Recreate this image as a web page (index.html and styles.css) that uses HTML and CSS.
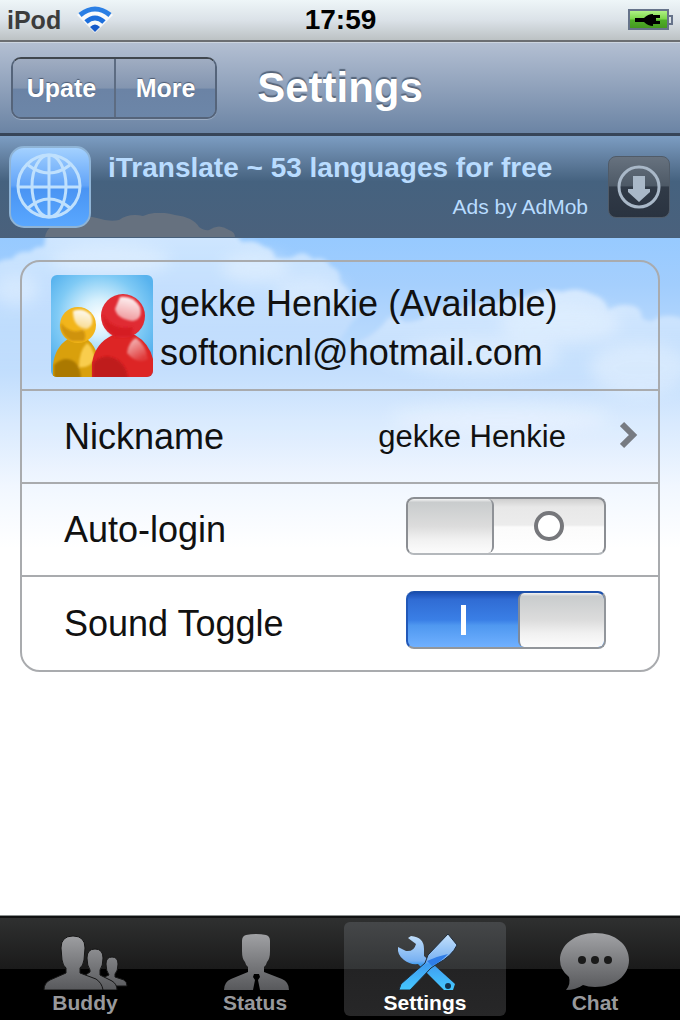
FILE: index.html
```html
<!DOCTYPE html>
<html lang="en">
<head>
    <meta charset="UTF-8">
    <meta name="viewport" content="width=device-width, initial-scale=1.0">
    <title>Settings</title>
    <link rel="stylesheet" href="styles.css">
</head>
<body>

    <!-- Status bar -->
    <div class="status-bar">
        <div class="carrier">
            <span>iPod</span>
            <svg class="wifi" viewBox="0 0 36 28" aria-hidden="true">
                <path d="M0 9 Q18 -8 36 9 L18 27 Z" fill="#fff" opacity="0.8"/>
                <g fill="none" stroke="#1d6fdc" stroke-width="5">
                    <path d="M3 9 Q18 -3 33 9" stroke="#2b7fe4"/>
                    <path d="M9 16 Q18 8 27 16"/>
                </g>
                <path d="M13 21 Q18 16 23 21 L18 26 Z" fill="#1559c9"/>
            </svg>
        </div>
        <span class="clock">17:59</span>
        <svg class="battery" viewBox="0 0 46 22" aria-hidden="true">
            <defs>
                <linearGradient id="charge" x1="0" y1="0" x2="0" y2="1">
                    <stop offset="0" stop-color="#b6f58c"/>
                    <stop offset="0.45" stop-color="#7ed84c"/>
                    <stop offset="0.55" stop-color="#4fae28"/>
                    <stop offset="1" stop-color="#43961f"/>
                </linearGradient>
            </defs>
            <rect x="1" y="1" width="39" height="19" fill="url(#charge)" stroke="#66738a" stroke-width="2"/>
            <path d="M41 7 h3 v8 h-3" fill="none" stroke="#66738a" stroke-width="2"/>
            <path d="M7 9 h9 q4 -4 9 -4 v1 h7 v3 h-4 v3 h4 v3 h-7 v2 q-5 0 -9 -4 h-9 z" fill="#000"/>
        </svg>
    </div>

    <!-- Navigation bar -->
    <header class="nav-bar">
        <div class="nav-buttons">
            <button type="button">Upate</button>
            <button type="button">More</button>
        </div>
        <h1>Settings</h1>
    </header>

    <!-- Ad banner -->
    <div class="ad">
        <svg class="ad-cloud" viewBox="0 0 190 24" aria-hidden="true">
            <path d="M0 24 Q2 10 22 11 Q34 1 52 5 Q64 9 74 7 Q84 0 98 3 Q112 -3 130 2 Q148 4 154 14 Q160 18 164 17 Q174 10 184 17 Q190 19 190 24 Z" fill="#66717f"/>
        </svg>
        <svg class="ad-icon" viewBox="0 0 82 82" aria-hidden="true">
            <defs>
                <linearGradient id="globe" x1="0" y1="0" x2="0" y2="1">
                    <stop offset="0" stop-color="#a5d2ff"/>
                    <stop offset="0.48" stop-color="#62a4f8"/>
                    <stop offset="0.52" stop-color="#4a94f3"/>
                    <stop offset="1" stop-color="#5aa8ff"/>
                </linearGradient>
            </defs>
            <rect x="1" y="1" width="80" height="80" rx="14" fill="url(#globe)" stroke="#8fb4d6" stroke-width="2"/>
            <g fill="none" stroke="#bfe0fd" stroke-width="3">
                <circle cx="40" cy="40" r="31"/>
                <ellipse cx="40" cy="40" rx="17" ry="31"/>
                <path d="M40 9 V71 M9 41 H71"/>
                <path d="M19 19 Q40 35 61 19 M19 62 Q40 44 61 62"/>
            </g>
        </svg>
        <div class="ad-text">
            <a href="#">iTranslate ~ 53 languages for free</a>
            <small>Ads by AdMob</small>
        </div>
        <button type="button" class="ad-download" aria-label="Download">
            <svg viewBox="0 0 44 44" aria-hidden="true">
                <circle cx="22" cy="22" r="20" fill="none" stroke="#a9b8c8" stroke-width="3"/>
                <path d="M16 11 h12 v13 h5 v3 l-11 10 l-11 -10 v-3 h5 z" fill="#a9b8c8"/>
            </svg>
        </button>
    </div>

    <main class="content">
        <!-- Sky behind the list -->
        <svg class="sky" viewBox="0 0 680 310" preserveAspectRatio="none" aria-hidden="true">
            <defs>
                <linearGradient id="sky" x1="0" y1="0" x2="0" y2="1">
                    <stop offset="0" stop-color="#97caff"/>
                    <stop offset="0.15" stop-color="#a1cdfd"/>
                    <stop offset="0.45" stop-color="#c4dffd"/>
                    <stop offset="0.6" stop-color="#d9eafe"/>
                    <stop offset="0.8" stop-color="#f1f7ff"/>
                    <stop offset="1" stop-color="#ffffff"/>
                </linearGradient>
                <linearGradient id="cloud" x1="0" y1="0" x2="0" y2="1">
                    <stop offset="0" stop-color="#fff" stop-opacity="0.55"/>
                    <stop offset="0.5" stop-color="#fff" stop-opacity="0.25"/>
                    <stop offset="0.9" stop-color="#fff" stop-opacity="0"/>
                </linearGradient>
                <filter id="soft" x="-10%" y="-10%" width="120%" height="120%">
                    <feGaussianBlur stdDeviation="2"/>
                </filter>
                <filter id="softer" x="-20%" y="-20%" width="140%" height="140%">
                    <feGaussianBlur stdDeviation="8"/>
                </filter>
            </defs>
            <rect width="680" height="310" fill="url(#sky)"/>
            <g filter="url(#soft)" fill="url(#cloud)">
                <path d="M-10 30 Q0 20 12 21 Q18 12 30 14 Q36 8 44 9 L46 -4 H236 L242 4 Q256 1 264 9 Q274 10 275 20 Q290 22 296 17 Q304 12 313 21 Q326 18 330 28 Q342 32 340 44 Q352 52 352 64 Q366 74 352 84 Q330 120 300 140 Q240 150 160 150 Q60 150 -10 150 Z"/>
                <path d="M350 108 Q376 98 388 80 Q398 76 404 84 Q420 84 428 76 Q444 66 462 72 Q474 62 490 66 Q510 58 524 60 Q540 50 562 54 Q576 48 592 56 Q606 60 608 72 Q618 66 628 67 Q642 68 642 80 Q652 86 656 80 Q672 74 690 84 V150 H420 Q380 135 350 108 Z"/>
            </g>
            <g filter="url(#softer)" fill="#fff" opacity="0.3">
                <ellipse cx="110" cy="22" rx="60" ry="16"/>
                <ellipse cx="16" cy="52" rx="24" ry="16"/>
                <ellipse cx="255" cy="30" rx="34" ry="16"/>
                <ellipse cx="310" cy="54" rx="36" ry="16"/>
                <ellipse cx="560" cy="86" rx="60" ry="20"/>
                <ellipse cx="480" cy="118" rx="80" ry="20"/>
                <ellipse cx="640" cy="130" rx="50" ry="26"/>
                <ellipse cx="500" cy="180" rx="110" ry="14"/>
            </g>
        </svg>

        <div class="card">
            <div class="row profile">
                <svg class="avatar" viewBox="0 0 102 102" role="img" aria-label="Messenger">
                    <defs>
                        <radialGradient id="glow" cx="0.48" cy="0.42" r="0.6">
                            <stop offset="0" stop-color="#ffffff"/>
                            <stop offset="0.3" stop-color="#d6f0fd"/>
                            <stop offset="0.7" stop-color="#7fcaf5"/>
                            <stop offset="1" stop-color="#58b3ee"/>
                        </radialGradient>
                        <linearGradient id="shine" x1="0.6" y1="0" x2="0.4" y2="1">
                            <stop offset="0" stop-color="#fff" stop-opacity="0.95"/>
                            <stop offset="1" stop-color="#fff" stop-opacity="0.5"/>
                        </linearGradient>
                        <linearGradient id="shine-low" x1="0" y1="0" x2="0.5" y2="1">
                            <stop offset="0" stop-color="#fff" stop-opacity="0.75"/>
                            <stop offset="1" stop-color="#fff" stop-opacity="0.1"/>
                        </linearGradient>
                        <filter id="blend">
                            <feGaussianBlur stdDeviation="1"/>
                        </filter>
                        <clipPath id="avatar-clip"><rect width="102" height="102" rx="6"/></clipPath>
                    </defs>
                    <g clip-path="url(#avatar-clip)">
                        <rect width="102" height="102" fill="url(#glow)"/>
                        <!-- yellow buddy -->
                        <path d="M2 106 V90 Q4 72 17 64 L36 64 Q44 70 48 84 V106 Z" fill="#d9a00c"/>
                        <circle cx="27" cy="50" r="18" fill="#f2b51b"/>
                        <g filter="url(#blend)">
                            <path d="M3 104 V90 Q14 80 24 87 Q30 94 30 104 Z" fill="#ab7906"/>
                            <path d="M28 92 Q28 76 36 68 Q42 72 44 84 Q38 94 28 92 Z" fill="#f9cd4e"/>
                            <path d="M10 48 Q20 60 32 55 Q36 60 33 66 H21 Q9 60 10 48 Z" fill="#cf930a"/>
                            <path d="M22 36 Q32 32 40 40 Q44 50 36 54 Q22 53 22 36 Z" fill="url(#shine)"/>
                        </g>
                        <!-- red buddy -->
                        <path d="M41 106 V88 Q44 68 62 60 H84 Q98 68 102 84 V106 Z" fill="#dd2525"/>
                        <circle cx="72" cy="41" r="22" fill="#e02b33"/>
                        <g filter="url(#blend)">
                            <path d="M42 104 V88 Q54 76 68 86 Q76 92 77 104 Z" fill="#bf1b1d"/>
                            <path d="M76 78 Q78 66 85 63 Q95 70 97 84 Q86 90 76 78 Z" fill="url(#shine-low)"/>
                            <path d="M52 40 Q62 56 82 52 Q80 58 82 62 H64 Q52 54 52 40 Z" fill="#d51f22"/>
                            <path d="M69 22 Q82 20 89 32 Q92 44 82 46 Q66 44 64 34 Z" fill="url(#shine)"/>
                        </g>
                    </g>
                </svg>
                <div class="profile-text">
                    <div>gekke Henkie (Available)</div>
                    <div>softonicnl@hotmail.com</div>
                </div>
            </div>

            <a class="row nickname" href="#">
                <span>Nickname</span>
                <span class="value">gekke Henkie</span>
                <svg class="chevron" viewBox="0 0 18 28" aria-hidden="true">
                    <path d="M2 3 L13 14 L2 25" fill="none" stroke="#777b82" stroke-width="6"/>
                </svg>
            </a>

            <div class="row">
                <label for="auto-login">Auto-login</label>
                <input type="checkbox" class="toggle" id="auto-login">
            </div>

            <div class="row">
                <label for="sound">Sound Toggle</label>
                <input type="checkbox" class="toggle" id="sound" checked>
            </div>
        </div>
    </main>

    <!-- Tab bar -->
    <nav class="tab-bar">
        <svg class="defs" width="0" height="0" aria-hidden="true">
            <defs>
                <linearGradient id="grey" gradientUnits="userSpaceOnUse" x1="0" y1="4" x2="0" y2="60">
                    <stop offset="0" stop-color="#a0a1a4"/>
                    <stop offset="0.5" stop-color="#7b7c7f"/>
                    <stop offset="1" stop-color="#58595c"/>
                </linearGradient>
                <linearGradient id="blue" gradientUnits="userSpaceOnUse" x1="0" y1="4" x2="0" y2="60">
                    <stop offset="0" stop-color="#c5e1fb"/>
                    <stop offset="0.48" stop-color="#78b1f2"/>
                    <stop offset="0.54" stop-color="#3f9cf0"/>
                    <stop offset="1" stop-color="#45c8ff"/>
                </linearGradient>
            </defs>
        </svg>

        <a href="#" class="tab">
            <svg viewBox="0 0 86 60" aria-hidden="true">
                <g fill="url(#grey)" stroke="#151515" stroke-width="1">
                    <path d="M70 27 Q76 27 76 34 Q76 41 73 44 V47 L82 50 Q85 52 85 56 H66 L60 48 L67 45 Q64 41 64 34 Q64 27 70 27 Z"/>
                    <path d="M53 19 Q61 19 61 28 Q61 36 58 40 V45 L70 51 Q75 54 75 60 H50 L42 46 L48 42 V40 Q45 36 45 28 Q45 19 53 19 Z"/>
                    <path d="M31 6 Q43 6 43 18 L42 30 Q41 36 38 38 V43 L54 49 Q60 53 61 60 H2 Q2 53 8 50 L24 43 V38 Q21 36 20 30 L19 18 Q19 6 31 6 Z"/>
                </g>
            </svg>
            <span>Buddy</span>
        </a>
        <a href="#" class="tab">
            <svg viewBox="0 0 86 60" aria-hidden="true">
                <path d="M34 5 Q44 3 54 5 Q58 6 58 11 V21 Q58 29 55 32 Q54 36 52 37 V42 L70 49 Q77 52 77 60 H12 Q12 52 19 49 L36 42 V37 Q34 36 33 32 Q30 29 30 21 V11 Q30 6 34 5 Z" fill="url(#grey)"/>
                <path d="M42 44 h5 l1 3 l-2 3 l2 10 h-7 l2 -10 l-2 -3 z" fill="#000"/>
            </svg>
            <span>Status</span>
        </a>
        <a href="#" class="tab active" aria-current="page">
            <svg viewBox="0 0 86 60" aria-hidden="true">
                <!-- wrench -->
                <path d="M29 6 Q42 7 42 19 L42 26 L73 54 L71 60 L62 60 L36 34 Q28 35 22 30 Q15 25 16 17 L24 21 Q32 22 34 14 L26 8 Z" fill="url(#blue)"/>
                <circle cx="66" cy="56" r="3" fill="#12324d"/>
                <!-- screwdriver -->
                <path d="M66 4 L75 15 Q70 26 55 34 L49 38 L28 60 H17 L19 54 L43 33 L46 25 Z" fill="url(#blue)" stroke="#1f2c3a" stroke-width="1"/>
                <path d="M45 31 Q56 26 66 24 Q60 31 50 36 Z" fill="#2f7de8"/>
            </svg>
            <span>Settings</span>
        </a>
        <a href="#" class="tab">
            <svg viewBox="0 0 86 60" aria-hidden="true">
                <path d="M43 3 C64 3 77 15 77 30 C77 46 62 57 43 57 Q36 57 31 55 Q24 60 14 60 Q19 54 17 47 Q8 40 8 30 C8 15 23 3 43 3 Z" fill="url(#grey)"/>
                <g fill="#1a1a1a">
                    <circle cx="30" cy="30" r="4"/>
                    <circle cx="43" cy="30" r="4"/>
                    <circle cx="56" cy="30" r="4"/>
                </g>
            </svg>
            <span>Chat</span>
        </a>
    </nav>

</body>
</html>
```
FILE: styles.css
```css
*,
*::before,
*::after {
    box-sizing: border-box;
}

body {
    margin: 0;
    min-height: 100vh;
    display: flex;
    flex-direction: column;
    background-color: #fff;
    color: #111;
    font-family: "Liberation Sans", Arial, sans-serif;
}

button {
    font-family: inherit;
    cursor: pointer;
}

a {
    color: inherit;
    text-decoration: none;
}

/* Status bar */
.status-bar {
    display: grid;
    grid-template-columns: 1fr auto 1fr;
    align-items: center;
    height: 42px;
    padding: 0 6px 0 7px;
    background: linear-gradient(#eef6f8, #dbe2e8 50%, #bcc2c4);
    border-bottom: 2px solid #6b6e72;
    font-weight: bold;
}

.carrier {
    display: flex;
    align-items: center;
    gap: 16px;
    color: #3c3c3c;
    font-size: 25px;
}

.wifi {
    width: 36px;
    height: 28px;
}

.clock {
    color: #000;
    font-size: 28px;
}

.battery {
    width: 46px;
    height: 22px;
    justify-self: end;
}

/* Navigation bar */
.nav-bar {
    display: grid;
    grid-template-columns: 1fr auto 1fr;
    align-items: center;
    height: 94px;
    padding: 0 11px;
    background: linear-gradient(#b3bfd2, #8fa1bb 50%, #6b84a4);
    border-top: 1px solid #cdd5e0;
    border-bottom: 3px solid #374558;
}

.nav-bar h1 {
    margin: 0;
    color: #fff;
    font-size: 42px;
    text-shadow: 0 -2px 1px #56657a;
}

.nav-buttons {
    display: flex;
    justify-self: start;
    border: 2px solid #55647a;
    border-top-color: #40474f;
    border-radius: 10px;
    overflow: hidden;
    box-shadow: 0 1px 0 #9aabc2;
}

.nav-buttons button {
    width: 101px;
    height: 58px;
    padding: 0 4px 0 0;
    border: 0;
    background: linear-gradient(#a0adc2, #8395b0 50%, #6b83a5 52%, #6c86a8);
    color: #fff;
    font-size: 25px;
    font-weight: bold;
    text-shadow: 0 -1px 1px #4c5b72;
}

.nav-buttons button + button {
    padding-right: 0;
    border-left: 2px solid #5d6c82;
}

/* Ad banner */
.ad {
    position: relative;
    display: flex;
    align-items: center;
    height: 102px;
    padding: 0 10px 0 9px;
    background: linear-gradient(#7c9dc2, #5f7c9c 25%, #45627f 45%, #4a617c);
    border-bottom: 1px solid #48607a;
}

/* Top of the cloud showing through the banner */
.ad-cloud {
    position: absolute;
    left: 45px;
    bottom: 0;
    width: 190px;
    height: 24px;
}

.ad-icon {
    position: relative;
    width: 82px;
    height: 82px;
}

.ad-text {
    position: relative;
    flex: 1;
    display: flex;
    flex-direction: column;
    padding: 0 20px 0 17px;
    color: #b9dcff;
}

.ad-text a {
    font-size: 28px;
    font-weight: bold;
    line-height: 40px;
}

.ad-text small {
    align-self: flex-end;
    font-size: 21px;
    line-height: 38px;
}

.ad-download {
    display: flex;
    align-items: center;
    justify-content: center;
    width: 62px;
    height: 62px;
    padding: 0;
    border: 1px solid #505b68;
    border-radius: 8px;
    background: linear-gradient(#67727f, #4d5966 48%, #303a47 50%, #2a3340);
}

.ad-download svg {
    width: 44px;
    height: 44px;
}

/* Settings list */
.content {
    position: relative;
    flex: 1;
    padding: 22px 20px;
}

.sky {
    position: absolute;
    top: 0;
    left: 0;
    width: 100%;
    height: 310px;
}

.card {
    position: relative;
    border: 2px solid #a9abae;
    border-radius: 20px;
    background-color: rgba(255, 255, 255, 0.05);
    font-size: 36px;
}

.row {
    display: flex;
    align-items: center;
    justify-content: space-between;
    min-height: 93px;
    padding: 0 52px 0 42px;
    border-bottom: 2px solid #a9abae;
}

.row:last-child {
    border-bottom: 0;
}

.profile {
    justify-content: flex-start;
    gap: 7px;
    min-height: 129px;
    padding: 0 20px 0 29px;
}

.avatar {
    width: 102px;
    height: 102px;
}

.profile-text {
    padding-top: 4px;
    line-height: 49px;
}

.nickname {
    padding-right: 20px;
}

.value {
    flex: 1;
    padding-right: 54px;
    font-size: 31px;
    text-align: right;
}

.chevron {
    width: 18px;
    height: 28px;
    margin-bottom: 4px;
}

/* On/off switch, the knob is ::before and the mark is ::after */
.toggle {
    appearance: none;
    display: flex;
    align-items: center;
    width: 200px;
    height: 58px;
    margin: 0 0 8px;
    border: 2px solid #8b8e93;
    border-bottom-color: #b4b8bc;
    border-radius: 8px;
    background: linear-gradient(#cfcfcf, #e8e8e8 15%, #ececec 48%, #fbfbfb 52%, #fff);
    overflow: hidden;
    cursor: pointer;
}

.toggle::before {
    content: "";
    width: 86px;
    height: 54px;
    border-right: 2px solid #8f9297;
    border-radius: 6px;
    background: linear-gradient(#f4f4f4, #c9cccd 6%, #dcdcdc 50%, #f1f1f1 75%, #fcfcfc);
}

.toggle::after {
    content: "";
    width: 30px;
    height: 30px;
    margin: 0 auto;
    border: 4px solid #76777b;
    border-radius: 50%;
    background-color: #fff;
}

.toggle:checked {
    border-color: #1c50ab #92969b #92969b #2158b8;
    background: linear-gradient(#1c50b5, #306cd4 12%, #3a7fe6 50%, #4f98f0 60%, #6fb0ff);
}

.toggle:checked::before {
    order: 2;
    border-right: 0;
    border-left: 2px solid #7d8a9c;
}

.toggle:checked::after {
    width: 5px;
    border: 0;
    border-radius: 0;
}

/* Tab bar */
.tab-bar {
    display: flex;
    gap: 8px;
    padding: 4px;
    background: linear-gradient(#2f3030, #1a1a1a 50%, #000 50%);
    border-top: 2px solid #111;
    box-shadow: 0 -1px 0 #8b9090;
}

.defs {
    position: absolute;
}

.tab {
    flex: 1;
    display: flex;
    flex-direction: column;
    align-items: center;
    padding-top: 8px;
    border-radius: 6px;
    color: #98999c;
    font-size: 21px;
    font-weight: bold;
    line-height: 26px;
}

.tab svg {
    width: 86px;
    height: 60px;
}

.tab.active {
    background: linear-gradient(#454749, #333536 50%, #232324 50%, #272728);
    color: #fff;
}
```
